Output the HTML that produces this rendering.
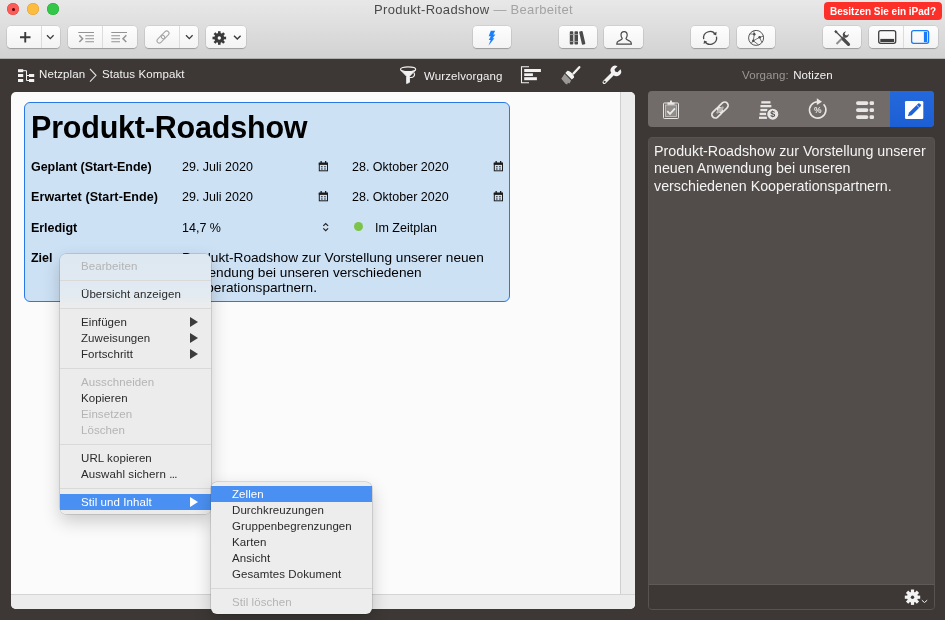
<!DOCTYPE html>
<html lang="de"><head><meta charset="utf-8"><title>Produkt-Roadshow</title>
<style>
*{box-sizing:border-box;margin:0;padding:0}
html,body{width:945px;height:620px;overflow:hidden;background:#3d3835;font-family:"Liberation Sans",sans-serif;-webkit-font-smoothing:antialiased}
.abs{position:absolute}
#top{position:absolute;left:0;top:0;width:945px;height:59px;background:linear-gradient(#e8e8e8,#d2d2d2);border-bottom:1px solid #b0b0b0}
.tl{position:absolute;top:3px;width:12px;height:12px;border-radius:50%}
#title{position:absolute;left:1px;width:945px;top:2px;text-align:center;font-size:13px;line-height:15px;color:#4a4a4a;letter-spacing:.3px;white-space:nowrap}
#title span{color:#a3a3a3}
#badge{position:absolute;left:824px;top:2px;width:118px;height:18px;border-radius:4px;background:#fc3029;color:#fff;font-size:10px;line-height:19.5px;text-align:center;font-weight:bold;letter-spacing:0;white-space:nowrap}
.btn{position:absolute;top:26px;height:22px;border-radius:4px;background:linear-gradient(#fefefe,#f3f3f3);box-shadow:0 0 0 .5px rgba(0,0,0,.12),0 1px 1px rgba(0,0,0,.22)}
.btn i{position:absolute;top:0;width:1px;height:22px;background:#dcdcdc}
.btn svg{position:absolute}
#crumbs{position:absolute;left:0;top:59px;width:945px;height:32px;color:#fff;font-size:11.5px}
#canvas{position:absolute;left:10.5px;top:91.5px;width:624px;height:517px;background:#fbfbfb;border-radius:5px;overflow:hidden}
#vs{position:absolute;right:0;top:0;width:15px;height:100%;background:#ececec;border-left:1px solid #cfcfcf}
#hs{position:absolute;left:0;bottom:0;width:100%;height:15px;background:#ececec;border-top:1px solid #d4d4d4}
#card{position:absolute;left:24px;top:102px;width:486px;height:200px;background:#cde1f5;border:1px solid #2a78e4;border-radius:6px}
#card h1{position:absolute;left:6px;top:7px;font-size:30.5px;line-height:34px;font-weight:bold;color:#000;letter-spacing:-.2px;white-space:nowrap}
.lb{position:absolute;left:6px;font-size:12.5px;font-weight:bold;line-height:16px;color:#000;white-space:nowrap;letter-spacing:-.05px}
.v{position:absolute;font-size:12.5px;line-height:16px;color:#000;white-space:nowrap}
.menu{position:absolute;background:#ededed;border-radius:6px;box-shadow:0 0 0 .5px rgba(0,0,0,.22),0 7px 18px rgba(0,0,0,.2);font-size:11.5px;color:#2a2a2a;letter-spacing:.08px}
.mi{position:absolute;left:0;width:100%;height:16px;line-height:16px;padding-left:21px;white-space:nowrap}
.mi.d{color:#b4b4b4}
.mi.s{background:#4a90f2;color:#fff}
.sep{position:absolute;left:0;width:100%;height:1px;background:#d9d9d9}
.ar{position:absolute;right:13px;top:3px;width:0;height:0;border-left:8px solid #3c3c3c;border-top:5px solid transparent;border-bottom:5px solid transparent}
.s .ar{border-left-color:#fff}
#tabs{position:absolute;left:648px;top:91px;width:286px;height:36px;background:#716c69;border-radius:4px;overflow:hidden}
#tabs b{position:absolute;left:242px;top:0;width:44px;height:36px;background:linear-gradient(#2469dc,#1c5fd4)}
#notes{position:absolute;left:648px;top:137px;width:287px;height:473px;background:#524d4a;border-radius:4px;border:1px solid #585350;overflow:hidden;color:#f4f4f4;font-size:14.25px;line-height:17.3px}
#notes p{position:absolute;left:5px;top:5px;white-space:nowrap}
#nb{position:absolute;left:0;bottom:0;width:100%;height:25px;background:#3d3835;border-top:1px solid #5f5a57}
.ct{line-height:14px;white-space:nowrap;letter-spacing:.1px;color:#f2f2f2;font-size:11.5px}
#top,#crumbs,#card,#notes,.menu,#tabs{will-change:transform}
</style></head><body>
<div id="top">
 <div class="tl" style="left:7px;background:#fc5b57;box-shadow:inset 0 0 0 .5px #df4744"></div>
 <div class="tl" style="left:11.5px;top:7.5px;width:3px;height:3px;background:#4d0000"></div>
 <div class="tl" style="left:27px;background:#fdbc40;box-shadow:inset 0 0 0 .5px #de9f34"></div>
 <div class="tl" style="left:47px;background:#33c748;box-shadow:inset 0 0 0 .5px #27aa35"></div>
 <div id="title">Produkt-Roadshow <span>— Bearbeitet</span></div>
 <div id="badge">Besitzen Sie ein iPad?</div>

 <div class="btn" style="left:7px;width:53px"><i style="left:34px"></i>
  <svg width="53" height="22"><path d="M13 11.200h10.500M18.250 5.950v10.500" stroke="#3a3a3a" stroke-width="1.900" fill="none"/><path d="M40 9.3l3.3 3.3 3.3-3.3" stroke="#3a3a3a" stroke-width="1.3" fill="none"/></svg></div>
 <div class="btn" style="left:68px;width:69px"><i style="left:34px"></i>
  <svg width="69" height="22" stroke="#939393" stroke-width="1.100" fill="none"><path d="M10.300 6.500h15.700M17.300 9.800h8.700M17.300 12.800h8.700M17.300 15.800h8.700"/><path d="M11.300 9.300l3.300 3.400-3.300 3.400" stroke-width="1.500"/><path d="M43.300 6.500h15.700M43.300 9.800h8.700M43.300 12.800h8.700M43.300 15.800h8.700"/><path d="M58.300 9.300l-3.300 3.400 3.300 3.400" stroke-width="1.500"/></svg></div>
 <div class="btn" style="left:145px;width:53px"><i style="left:34px"></i>
  <svg width="54" height="22"><g transform="translate(18 11) rotate(-45)" stroke="#a6a6a6" stroke-width="1.1" fill="none"><rect x="-7.5" y="-2.300" width="9" height="4.600" rx="2.300"/><rect x="-1.500" y="-2.300" width="9" height="4.600" rx="2.300"/></g><path d="M41 9.300l3.300 3.300 3.300-3.300" stroke="#3a3a3a" stroke-width="1.300" fill="none"/></svg></div>
 <div class="btn" style="left:206px;width:40px">
  <svg width="40" height="22"><g transform="translate(13.300 12)" fill="#3a3a3a"><circle r="4.900"/><g id="tt"><rect x="-1.300" y="-6.800" width="2.600" height="13.600"/><rect x="-1.300" y="-6.800" width="2.600" height="13.600" transform="rotate(45)"/><rect x="-1.300" y="-6.800" width="2.600" height="13.600" transform="rotate(90)"/><rect x="-1.300" y="-6.800" width="2.600" height="13.600" transform="rotate(135)"/></g><circle r="1.700" fill="#f8f8f8"/></g><path d="M28 9.800l3.300 3.300 3.300-3.300" stroke="#3a3a3a" stroke-width="1.400" fill="none"/></svg></div>

 <div class="btn" style="left:473px;width:38px"><svg width="38" height="22"><path d="M17.800 4.800h4.400l-2 3.700h2.200l-2.800 3.800h1.800l-6 7.400 2.300-5.600h-1.900l2-3.800h-2.100z" fill="#1a80fb"/></svg></div>
 <div class="btn" style="left:559px;width:38px"><svg width="38" height="22" fill="#4a4a4a"><rect x="10.800" y="5.200" width="3.500" height="13.400" rx=".8"/><rect x="15.500" y="5.200" width="3.500" height="13.400" rx=".8"/><rect x="21.500" y="5" width="3.500" height="13.600" rx=".8" transform="rotate(-13 23.200 11.800)"/><path d="M10.600 8.500h8.600M10.600 15.500h8.600" stroke="#a8a8a8" stroke-width=".8"/></svg></div>
 <div class="btn" style="left:604px;width:39px"><svg width="39" height="22"><path d="M20.100 5.600c2.100 0 3.100 1.500 3.100 3.500 0 1.600-.8 2.700-1.300 3.500 0 1.100 1.800 1.600 3.700 2.400 1.200.5 1.800 1.300 1.800 3.100h-14.600c0-1.800.6-2.600 1.800-3.100 1.900-.8 3.700-1.300 3.700-2.400-.5-.8-1.300-1.900-1.300-3.500 0-2 1-3.500 3.100-3.500z" fill="none" stroke="#4a4a4a" stroke-width="1.200"/></svg></div>
 <div class="btn" style="left:691px;width:38px"><svg width="38" height="22" fill="none" stroke="#4a4a4a" stroke-width="1.300"><path d="M12.700 13.200a6.500 6.500 0 0 1 11.800-4.800M25.500 10.600a6.500 6.500 0 0 1-11.800 4.800"/><path d="M25.600 5.800l-.4 3.600-3.300-1.300zM12.600 18l.4-3.600 3.300 1.300z" fill="#4a4a4a" stroke="none"/></svg></div>
 <div class="btn" style="left:737px;width:38px"><svg width="38" height="22" fill="none" stroke="#555" stroke-width=".8"><circle cx="19.100" cy="11.900" r="7.500" stroke-width="1"/><path d="M17.300 8.200l-1 6.600M16.300 14.800l6.300-3.500M17.300 8.200l-.6-3.400M17.300 8.200l-4.500-.3M22.600 11.300l3.900-1.200M22.600 11.300l2.300 5.200M16.300 14.800l-2.300 2.700M16.300 14.800l5.200 4"/><circle cx="17.300" cy="8.200" r="1.200" fill="#4a4a4a" stroke="none"/><circle cx="16.300" cy="14.800" r="1.200" fill="#4a4a4a" stroke="none"/><circle cx="22.600" cy="11.300" r="1.200" fill="#4a4a4a" stroke="none"/></svg></div>
 <div class="btn" style="left:823px;width:38px"><svg width="38" height="22" fill="none"><path d="M13.500 18l8-8" stroke="#8e8e8e" stroke-width="2"/><path d="M20.500 10.800a3.200 3.200 0 0 1 2.700-5.300l-1.600 1.800.6 1.800 1.800.5 1.700-1.600a3.200 3.200 0 0 1-4.500 3.400z" fill="#4a4a4a"/><path d="M12.500 5.300l8 8" stroke="#4a4a4a" stroke-width="1.300"/><path d="M12 4.800l1.800 1.800" stroke="#4a4a4a" stroke-width="2.200"/><path d="M20.200 13l5.300 5.300" stroke="#4a4a4a" stroke-width="3.200" stroke-linecap="round"/></svg></div>
 <div class="btn" style="left:869px;width:69px"><i style="left:34px"></i>
  <svg width="69" height="22" fill="none"><rect x="9.700" y="4.700" width="17" height="12.600" rx="2" stroke="#3f3f3f" stroke-width="1.300"/><rect x="11.300" y="12.900" width="13.800" height="3.100" fill="#3f3f3f"/><rect x="42.600" y="4.700" width="17" height="12.600" rx="2" stroke="#1a7bfa" stroke-width="1.300"/><rect x="54.900" y="5.800" width="3.300" height="10.400" fill="#1a7bfa"/></svg></div>
</div>

<div id="crumbs">
 <svg class="abs" style="left:17px;top:9px" width="19" height="16" fill="#f2f2f2"><rect x="1" y="1.200" width="5.200" height="3"/><rect x="1" y="6" width="5.200" height="3"/><rect x="1" y="11" width="5.200" height="3"/><rect x="12" y="6" width="5.200" height="3"/><rect x="12" y="11" width="5.200" height="3"/><path d="M6 2.700h3.500v9.800h2.500M9.500 7.500h2.500" stroke="#f2f2f2" fill="none" stroke-width="1"/></svg>
 <div class="abs ct" style="left:39px;top:8px">Netzplan</div>
 <svg class="abs" style="left:88px;top:8px" width="10" height="16"><path d="M2 2l6 6.300-6 6.300" stroke="#e0dfde" fill="none" stroke-width="1.100"/></svg>
 <div class="abs ct" style="left:102px;top:8px">Status Kompakt</div>
 <svg class="abs" style="left:398px;top:6px" width="20" height="20" fill="none" stroke="#f2f2f2" stroke-width="1.200"><ellipse cx="10.100" cy="4.200" rx="7.600" ry="2.400"/><path d="M2.800 5.300l5.800 6v7.300l2.900-1.300v-6l5.800-6c-3 2-11.500 2-14.500 0z" fill="#f2f2f2" stroke-width=".8"/><path d="M11.500 12.300c3.800 1 6.300-1.800 4.300-4.800" stroke-width="1.100"/></svg>
 <div class="abs ct" style="left:424px;top:10px">Wurzelvorgang</div>
 <svg class="abs" style="left:520px;top:6px" width="24" height="20" fill="#f2f2f2"><path d="M9 1.800h-7.500v16h7.500" stroke="#f2f2f2" fill="none" stroke-width="1.100"/><rect x="4.200" y="4" width="16.700" height="3"/><rect x="4.200" y="8.300" width="8.700" height="2.700"/><rect x="4.200" y="12.200" width="12.700" height="3"/></svg>
 <svg class="abs" style="left:558px;top:5px" width="26" height="22"><path d="M21.300 3.200l-5.800 6.300" stroke="#f2f2f2" stroke-width="2.300" stroke-linecap="round"/><path d="M9.500 6.800c2-.6 7 4.400 6.600 6.600l-2.300 2.200-6.500-6.600z" fill="#f2f2f2"/><path d="M6.600 9.800l6.500 6.600-1.500 3-1.800-.6-.5 1.700-1.600-.5-4.400-5.300z" fill="#9b9896"/></svg>
 <svg class="abs" style="left:600px;top:5px" width="24" height="22"><path d="M4.300 18.200l9.500-9.500" stroke="#f2f2f2" stroke-width="3.600" stroke-linecap="round"/><path d="M12 9.500a4.600 4.600 0 0 1 5.500-7.300l-3 3 .6 2.400 2.400.6 3-3a4.600 4.600 0 0 1-7.300 5.500z" fill="#f2f2f2"/><circle cx="4.600" cy="17.800" r="1.100" fill="#3d3835"/></svg>
 <div class="abs ct" style="left:742px;top:9px;color:#9b9795">Vorgang: <span style="color:#f2f2f2;padding-left:1px">Notizen</span></div>
</div>

<div id="canvas"><div id="vs"></div><div id="hs"></div></div>

<div id="card">
 <h1>Produkt-Roadshow</h1>
 <div class="lb" style="top:56px">Geplant (Start-Ende)</div>
 <div class="lb" style="top:86px;letter-spacing:.1px">Erwartet (Start-Ende)</div>
 <div class="lb" style="top:117px">Erledigt</div>
 <div class="lb" style="top:147px">Ziel</div>
 <div class="v" style="left:157px;top:56px">29. Juli 2020</div>
 <div class="v" style="left:157px;top:86px">29. Juli 2020</div>
 <div class="v" style="left:157px;top:117px">14,7 %</div>
 <div class="v" style="left:327px;top:56px">28. Oktober 2020</div>
 <div class="v" style="left:327px;top:86px">28. Oktober 2020</div>
 <div class="v" style="left:350px;top:117px">Im Zeitplan</div>
 <div class="abs" style="left:329px;top:119px;width:9px;height:9px;border-radius:50%;background:#7cc34a"></div>
 <div class="v" style="left:157px;top:147px;line-height:15px;font-size:13.65px">Produkt-Roadshow zur Vorstellung unserer neuen<br>Anwendung bei unseren verschiedenen<br>Kooperationspartnern.</div>
 <svg class="abs" style="left:293px;top:58px" width="11" height="11"><use href="#cal"/></svg>
 <svg class="abs" style="left:293px;top:88px" width="11" height="11"><use href="#cal"/></svg>
 <svg class="abs" style="left:468px;top:58px" width="11" height="11"><use href="#cal"/></svg>
 <svg class="abs" style="left:468px;top:88px" width="11" height="11"><use href="#cal"/></svg>
 <svg class="abs" style="left:297px;top:118.500px" width="8" height="10" fill="none" stroke="#222" stroke-width="1.200"><path d="M1.300 3.900l2.400-2.400 2.400 2.400M1.300 6.300l2.400 2.400 2.400-2.400"/></svg>
</div>
<svg width="0" height="0" style="position:absolute"><defs><g id="cal"><rect x="1.300" y="2.300" width="8.200" height="7.500" fill="none" stroke="#1c1c1c" stroke-width="1"/><rect x=".8" y="1.600" width="9.200" height="2.300" fill="#1c1c1c"/><rect x="2.500" y="0" width="1.300" height="2" fill="#1c1c1c"/><rect x="7" y="0" width="1.300" height="2" fill="#1c1c1c"/><rect x="3.100" y="5.100" width="1.500" height="1.200" fill="#333"/><rect x="6.200" y="5.100" width="1.500" height="1.200" fill="#333"/><rect x="3.100" y="7.400" width="1.500" height="1.200" fill="#333"/><rect x="6.200" y="7.400" width="1.500" height="1.200" fill="#333"/></g></defs></svg>

<div id="tabs"><b></b>
 <svg class="abs" style="left:0;top:0" width="286" height="36" fill="none" stroke="#e9e7e6" stroke-width="1.300">
  <g><rect x="15.500" y="12" width="15" height="15.500" rx=".8" stroke-width="1"/><rect x="17.500" y="14" width="11" height="11.500" stroke-width=".8" stroke="#cfccca" fill="rgba(255,255,255,.22)"/><path d="M19.500 11.500h2.300l.5-2h1.400l.5 2h2.300v2.300h-7z" fill="#e9e7e6" stroke="none"/><path d="M19.300 20.200l2.700 2.700 5-5.600" stroke-width="1.800"/></g>
  <g transform="translate(72 19) rotate(-44)"><rect x="-10" y="-3.400" width="11.800" height="6.800" rx="3.400" stroke-width="1.700"/><rect x="-1.800" y="-3.400" width="11.800" height="6.800" rx="3.400" stroke-width="1.700"/><rect x="-4.800" y="-1.300" width="9.600" height="2.600" rx="1.300" fill="#b5b1af" stroke="none"/></g>
  <g stroke="none" fill="#e9e7e6"><rect x="113.300" y="10.200" width="9.200" height="2.300"/><rect x="112.400" y="14" width="11" height="2.300"/><rect x="112.400" y="17.900" width="7" height="2.300"/><rect x="111.600" y="21.800" width="6.500" height="2.300"/><rect x="111" y="25.600" width="8" height="2.300"/><circle cx="124.800" cy="23.200" r="6.100" stroke="#716c69" stroke-width="1.200"/></g>
  <text x="124.800" y="26.300" font-family="Liberation Sans,sans-serif" font-size="9" font-weight="bold" fill="#5a5553" stroke="none" text-anchor="middle">$</text>
  <g><path d="M169.700 10.700a8.200 8.200 0 1 0 5.900 2.500" stroke-width="1.600"/><path d="M168.800 7.300l5.200 3.400-5.200 3.300z" fill="#e9e7e6" stroke="none"/></g>
  <text x="169.800" y="22.300" font-family="Liberation Sans,sans-serif" font-size="8.500" font-weight="bold" fill="#e9e7e6" stroke="none" text-anchor="middle">%</text>
  <g stroke="none" fill="#e9e7e6"><rect x="208" y="10.200" width="12.400" height="3.800" rx="1.900"/><rect x="208" y="17.200" width="12.400" height="3.800" rx="1.900"/><rect x="208" y="24.200" width="12.400" height="3.800" rx="1.900"/><rect x="221.600" y="10.200" width="4.400" height="3.800" rx="1.300"/><rect x="221.600" y="17.200" width="4.400" height="3.800" rx="1.300"/><rect x="221.600" y="24.200" width="4.400" height="3.800" rx="1.300"/></g>
  <g stroke="none"><rect x="257" y="10" width="18.300" height="18" rx="1.200" fill="#fff"/><path d="M259.800 25.300l1.300-3.700 8.600-8.700a1.700 1.700 0 0 1 2.400 0l.3.300a1.700 1.700 0 0 1 0 2.400l-8.700 8.600z" fill="#1f63d9"/><path d="M268.600 14l2.700 2.700" stroke="#fff" stroke-width=".7"/></g>
 </svg>
</div>
<div id="notes"><p>Produkt-Roadshow zur Vorstellung unserer<br>neuen Anwendung bei unseren<br>verschiedenen Kooperationspartnern.</p>
 <div id="nb"><svg class="abs" style="left:254px;top:3px" width="30" height="20"><g transform="translate(9.500 9.200)" fill="#f2f2f2"><circle r="5.500"/><rect x="-1.600" y="-7.700" width="3.200" height="15.400"/><rect x="-1.600" y="-7.700" width="3.200" height="15.400" transform="rotate(45)"/><rect x="-1.600" y="-7.700" width="3.200" height="15.400" transform="rotate(90)"/><rect x="-1.600" y="-7.700" width="3.200" height="15.400" transform="rotate(135)"/><circle r="1.700" fill="#3d3835"/></g><path d="M18.800 12.200l2.700 2.300 2.700-2.300" stroke="#f2f2f2" fill="none" stroke-width="1"/></svg></div>
</div>

<div class="menu" style="left:60px;top:254px;width:151px;height:260px;background:linear-gradient(#dde8f2 0,#e2eaf2 40px,#ececec 52px)">
 <div class="mi d" style="top:4px">Bearbeiten</div>
 <div class="sep" style="top:26px"></div>
 <div class="mi" style="top:32px">Übersicht anzeigen</div>
 <div class="sep" style="top:54px"></div>
 <div class="mi" style="top:60px">Einfügen<span class="ar"></span></div>
 <div class="mi" style="top:76px">Zuweisungen<span class="ar"></span></div>
 <div class="mi" style="top:92px">Fortschritt<span class="ar"></span></div>
 <div class="sep" style="top:114px"></div>
 <div class="mi d" style="top:120px">Ausschneiden</div>
 <div class="mi" style="top:136px">Kopieren</div>
 <div class="mi d" style="top:152px">Einsetzen</div>
 <div class="mi d" style="top:168px">Löschen</div>
 <div class="sep" style="top:190px"></div>
 <div class="mi" style="top:196px">URL kopieren</div>
 <div class="mi" style="top:212px">Auswahl sichern <span style="letter-spacing:-.7px">...</span></div>
 <div class="sep" style="top:234px"></div>
 <div class="mi s" style="top:240px">Stil und Inhalt<span class="ar"></span></div>
</div>
<div class="menu" style="left:211px;top:482px;width:161px;height:132px">
 <div class="mi s" style="top:4px">Zellen</div>
 <div class="mi" style="top:20px">Durchkreuzungen</div>
 <div class="mi" style="top:36px">Gruppenbegrenzungen</div>
 <div class="mi" style="top:52px">Karten</div>
 <div class="mi" style="top:68px">Ansicht</div>
 <div class="mi" style="top:84px">Gesamtes Dokument</div>
 <div class="sep" style="top:106px"></div>
 <div class="mi d" style="top:112px">Stil löschen</div>
</div>
</body></html>
